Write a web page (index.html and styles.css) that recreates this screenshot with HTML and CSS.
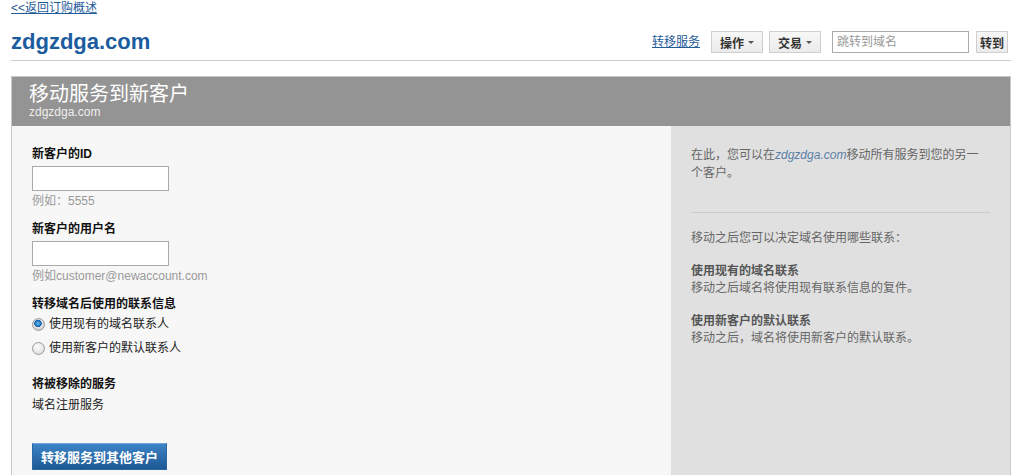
FILE: index.html
```html
<!DOCTYPE html>
<html lang="zh-CN">
<head>
  <meta charset="UTF-8">
  <title>移动服务到新客户</title>
  <link rel="stylesheet" href="styles.css">
</head>
<body>

<div class="page">
  <a class="back-link" href="#">&lt;&lt;返回订购概述</a>

  <div class="top-bar">
    <h1 class="domain-title">zdgzdga.com</h1>
    <div class="top-nav">
      <a class="nav-link" href="#">转移服务</a>
      <button class="menu-btn">操作<span class="caret"></span></button>
      <button class="menu-btn">交易<span class="caret"></span></button>
      <input class="jump-input" type="text" placeholder="跳转到域名">
      <button class="go-btn">转到</button>
    </div>
  </div>

  <div class="panel">
    <div class="panel-head">
      <h2>移动服务到新客户</h2>
      <div class="panel-sub">zdgzdga.com</div>
    </div>

    <div class="panel-body">
      <div class="form-col">
        <label class="field-label" for="newId">新客户的ID</label>
        <input class="text-field" type="text" id="newId">
        <div class="hint">例如：5555</div>

        <label class="field-label gap" for="newUser">新客户的用户名</label>
        <input class="text-field" type="text" id="newUser">
        <div class="hint">例如customer@newaccount.com</div>

        <div class="field-label gap">转移域名后使用的联系信息</div>
        <label class="radio-row"><input type="radio" name="contact" checked> 使用现有的域名联系人</label>
        <label class="radio-row"><input type="radio" name="contact"> 使用新客户的默认联系人</label>

        <div class="field-label section">将被移除的服务</div>
        <div class="service">域名注册服务</div>

        <button class="primary-btn">转移服务到其他客户</button>
      </div>

      <div class="info-col">
        <p class="intro">在此，您可以在<em>zdgzdga.com</em>移动所有服务到您的另一个客户。</p>
        <hr>
        <p>移动之后您可以决定域名使用哪些联系：</p>
        <div class="info-item">
          <strong>使用现有的域名联系</strong>
          <p>移动之后域名将使用现有联系信息的复件。</p>
        </div>
        <div class="info-item">
          <strong>使用新客户的默认联系</strong>
          <p>移动之后，域名将使用新客户的默认联系。</p>
        </div>
      </div>
    </div>
  </div>
</div>

</body>
</html>
```

FILE: styles.css
```css
body {
  margin: 0;
  padding: 0;
  font-family: "Liberation Sans", "Noto Sans CJK SC", Arial, sans-serif;
  font-size: 12px;
  color: #222;
  background: #fff;
}

.page {
  width: 1000px;
  margin-left: 11px;
}

.back-link {
  display: block;
  line-height: 16px;
  color: #1f5c99;
}

.top-bar {
  display: flex;
  justify-content: space-between;
  align-items: center;
  padding: 14px 0 6px;
  border-bottom: 1px solid #ccc;
}

.domain-title {
  margin: 0;
  font-size: 22px;
  line-height: 24px;
  font-weight: bold;
  color: #1a5c9e;
}

.top-nav {
  display: flex;
  align-items: center;
  padding-right: 3px;
}

.nav-link {
  color: #1f5c99;
  margin-right: 11px;
  line-height: 16px;
}

.menu-btn, .go-btn {
  height: 22px;
  border: 1px solid #cfcfcf;
  background: linear-gradient(#f7f7f7, #ebebeb);
  color: #333;
  font-family: inherit;
  font-size: 12px;
  font-weight: bold;
  padding: 0 8px;
  display: flex;
  align-items: center;
}

.menu-btn {
  width: 52px;
  margin-right: 6px;
  justify-content: center;
}

.menu-btn + .menu-btn {
  margin-right: 11px;
}

.caret {
  display: inline-block;
  margin-left: 4px;
  border-left: 3px solid transparent;
  border-right: 3px solid transparent;
  border-top: 3px solid #555;
}

.go-btn {
  margin-left: 7px;
  padding: 0 3px;
}

.jump-input {
  width: 137px;
  height: 22px;
  box-sizing: border-box;
  border: 1px solid #aaa;
  padding: 0 4px;
  font-family: inherit;
  font-size: 12px;
}

.jump-input::placeholder {
  color: #999;
}

.panel {
  margin-top: 15px;
  border: 1px solid #c8c8c8;
}

.panel-head {
  background: #949494;
  color: #fff;
  padding: 6px 17px 7px;
}

.panel-head h2 {
  margin: 0;
  font-size: 20px;
  line-height: 22px;
  font-weight: normal;
}

.panel-sub {
  line-height: 14px;
  color: #eee;
}

.panel-body {
  display: flex;
}

.form-col {
  width: 659px;
  box-sizing: border-box;
  background: #f7f7f7;
  padding: 20px 20px 30px;
}

.field-label {
  display: block;
  font-weight: bold;
  line-height: 16px;
  color: #111;
}

.field-label.gap {
  margin-top: 12px;
}

.field-label.section {
  margin-top: 16px;
}

.text-field {
  display: block;
  width: 137px;
  height: 25px;
  box-sizing: border-box;
  margin-top: 4px;
  border: 1px solid #aaa;
  background: #fff;
}

.hint {
  margin-top: 2px;
  line-height: 16px;
  color: #999;
}

.radio-row {
  display: flex;
  align-items: center;
  line-height: 24px;
  color: #222;
}

.radio-row input {
  appearance: none;
  width: 13px;
  height: 13px;
  margin: 0 4px 0 0;
  border: 1px solid #9a9a9a;
  border-radius: 50%;
  background: radial-gradient(circle at 40% 35%, #fff, #d4d4d4);
}

.radio-row input:checked {
  background: radial-gradient(circle at 45% 40%, #6cc0f5 0, #0d5ea6 3.5px, #e8e8e8 4px, #cfcfcf 6px);
}

.service {
  margin-top: 5px;
  line-height: 16px;
}

.primary-btn {
  display: block;
  margin-top: 30px;
  width: 135px;
  height: 27px;
  border: 1px solid #2a67a3;
  border-top-color: #6fa3dc;
  background: linear-gradient(#3d84c6, #1c5893);
  color: #fff;
  font-family: inherit;
  font-size: 13px;
  font-weight: bold;
  padding: 0;
}

.info-col {
  width: 339px;
  box-sizing: border-box;
  background: #e0e0e0;
  padding: 20px 20px 0;
  color: #666;
}

.info-col p {
  margin: 0;
  line-height: 17px;
}

.info-col p.intro {
  line-height: 18px;
}

.info-col em {
  color: #5b7fa6;
}

.info-col hr {
  margin: 30px 0 17px;
  border: 0;
  border-top: 1px solid #ccc;
}

.info-item {
  margin-top: 16px;
}

.info-item strong {
  display: block;
  line-height: 17px;
  color: #555;
}
```
